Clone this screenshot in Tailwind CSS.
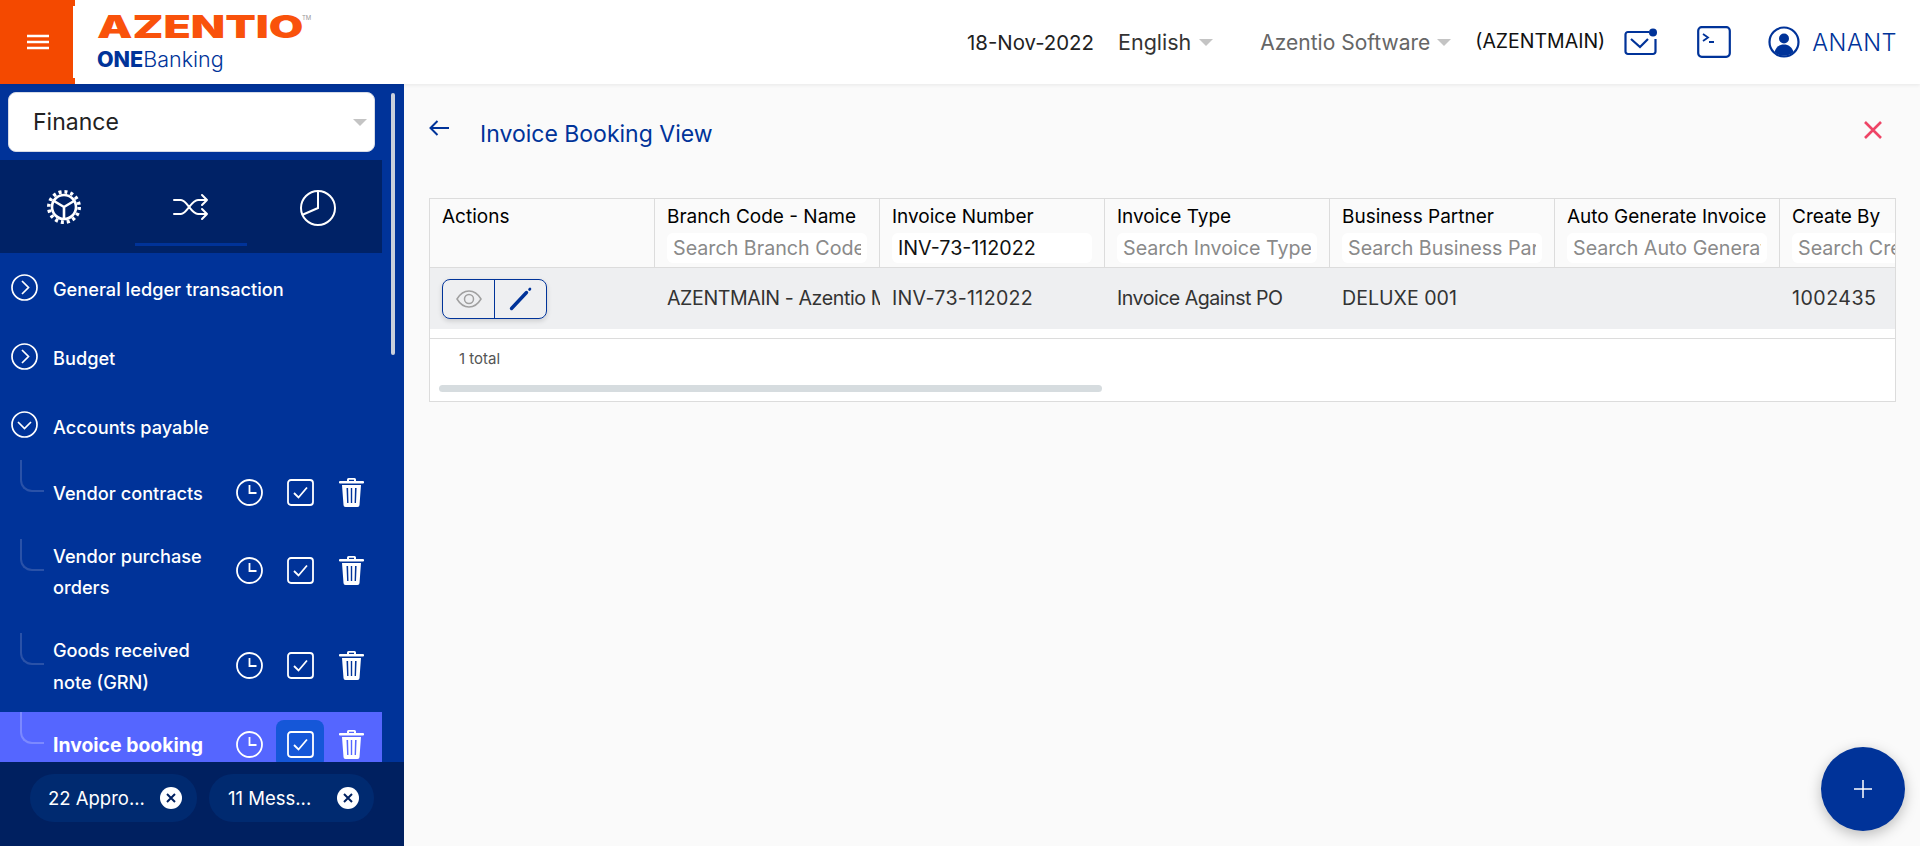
<!DOCTYPE html>
<html lang="en">
<head>
  <meta charset="UTF-8" />
  <title>Invoice Booking View</title>
  <script src="https://cdn.jsdelivr.net/npm/@tailwindcss/browser@4"></script>
</head>
<body class="h-[846px] w-[1920px] overflow-hidden bg-[#fafafa] font-['Inter',sans-serif]">
  <header class="relative z-10 flex h-[84px] items-center bg-white shadow-[0_1px_4px_rgba(0,0,0,0.08)]">
    <button class="relative flex h-[84px] w-[75px] items-center justify-center bg-[#f44900]">
      <svg width="24" height="16" viewBox="0 0 24 16" fill="none" stroke="#fff" stroke-width="2.4"><path d="M1 2h22M1 8h22M1 14h22"/></svg>
      <span class="absolute top-[6px] left-[73px] h-[72px] w-[2px] bg-white"></span>
    </button>
    <div class="ml-[22px] flex w-[240px] flex-col">
      <div class="flex h-[30px] items-center">
        <span class="inline-block w-[205px] origin-left scale-x-[1.44] text-[31px] leading-[30px] font-black text-[#f9520b]">AZENTIO</span>
        <span class="mb-[20px] text-[6px] text-[#999]">TM</span>
      </div>
      <div class="mt-[4px] text-[21.500px] leading-[26px] font-light text-[#003399]"><span class="font-extrabold">ONE</span>Banking</div>
    </div>
    <div class="ml-auto flex items-center pr-[23px]">
      <span class="mt-[2px] text-[20.400px] text-[#222]">18-Nov-2022</span>
      <span class="ml-[24px] text-[21.500px] text-[#333]">English</span>
      <span class="mt-[1px] ml-[8px] h-0 w-0 border-x-[7px] border-t-[7px] border-x-transparent border-t-[#c4c4c4]"></span>
      <span class="mt-[2px] ml-[47px] text-[21px] text-[#666]">Azentio Software</span>
      <span class="mt-[1px] ml-[7px] h-0 w-0 border-x-[7px] border-t-[7px] border-x-transparent border-t-[#c4c4c4]"></span>
      <span class="ml-[24px] text-[19.500px] text-[#111]">(AZENTMAIN)</span>
      <svg class="ml-[19px]" width="34" height="28" viewBox="0 0 34 28" fill="none" stroke="#003399" stroke-width="2.2"><path d="M25 4H4a2.500 2.500 0 0 0-2.500 2.500v17A2.500 2.500 0 0 0 4 26h25a2.500 2.500 0 0 0 2.500-2.500V11"/><path d="M7 11l9 8 8-8"/><circle cx="29" cy="4.500" r="4" fill="#003399" stroke="none"/></svg>
      <svg class="ml-[39px]" width="34" height="32" viewBox="0 0 34 32" fill="none" stroke="#003399" stroke-width="2.2"><rect x="1.200" y="1.200" width="31.600" height="29.600" rx="3.500"/><path d="M6 8l5 3.500L6 15M12 16h5" stroke-width="1.800"/></svg>
      <svg class="ml-[37px]" width="32" height="32" viewBox="0 0 32 32" fill="none"><circle cx="16" cy="16" r="14.500" stroke="#003399" stroke-width="2.200"/><circle cx="16" cy="12.500" r="5" fill="#003399"/><path d="M6.500 26c1.500-5 5-7.500 9.500-7.500s8 2.500 9.500 7.500a14 14 0 0 1-19 0z" fill="#003399"/></svg>
      <span class="mt-[2px] ml-[12px] text-[23.500px] font-light tracking-[0.5px] text-[#003399]">ANANT</span>
    </div>
  </header>

  <div class="flex h-[762px]">
    <aside class="relative flex w-[404px] shrink-0 flex-col overflow-hidden bg-[#003399]">
      <div class="absolute top-[9px] left-[391px] h-[262px] w-[4px] rounded bg-[#c9d0dc]"></div>
      <div class="px-[8px] pt-[8px]">
        <div class="flex h-[60px] w-[367px] items-center justify-between rounded-lg border border-[#d6dbe6] bg-white pr-[7px] pl-[24px]">
          <span class="text-[23px] text-[#222]">Finance</span>
          <span class="h-0 w-0 border-x-[7px] border-t-[7px] border-x-transparent border-t-[#c4c4c4]"></span>
        </div>
      </div>
      <div class="relative mt-[8px] grid h-[93px] w-[382px] shrink-0 grid-cols-[128px_127px_127px] items-center justify-items-center bg-[#002266]">
        <svg width="36" height="36" viewBox="0 0 36 36" fill="none" stroke="#fff">
          <circle cx="18" cy="18" r="15.200" stroke-width="3.600" stroke-dasharray="3 2.970"/>
          <circle cx="18" cy="18" r="12" stroke-width="2.600"/>
          <path d="M18 18L8 12M18 18l10-6M18 18v12" stroke-width="2.600"/>
        </svg>
        <svg class="-ml-[2px]" width="36" height="30" viewBox="0 0 36 30" fill="none" stroke="#fff" stroke-width="2" stroke-linecap="round" stroke-linejoin="round">
          <path d="M1 8h7c6 0 10 14 17 14h9M1 22h7c6 0 10-14 17-14h9M29 3l5 5-5 5M29 17l5 5-5 5"/>
        </svg>
        <svg class="-ml-[2px]" width="38" height="38" viewBox="0 0 38 38" fill="none" stroke="#fff" stroke-width="2">
          <circle cx="19" cy="20" r="17"/>
          <path d="M19 3v17L3 27"/>
        </svg>
        <div class="absolute top-[83px] left-[135px] h-[3px] w-[112px] bg-[#003399]"></div>
      </div>

      <div class="min-h-0 flex-1 overflow-hidden">
        <div class="mt-px flex h-[69px] items-center pt-[3px] pl-[11px] text-[18.200px] font-medium text-white">
          <svg class="mr-[15px] -mt-[6px]" width="27" height="27" viewBox="0 0 27 27" fill="none" stroke="#fff" stroke-width="1.700"><circle cx="13.500" cy="13.500" r="12.500"/><path d="M11 7l6.500 6.500L11 20"/></svg>
          General ledger transaction
        </div>
        <div class="flex h-[69px] items-center pt-[3px] pl-[11px] text-[18.200px] font-medium text-white">
          <svg class="mr-[15px] -mt-[6px]" width="27" height="27" viewBox="0 0 27 27" fill="none" stroke="#fff" stroke-width="1.700"><circle cx="13.500" cy="13.500" r="12.500"/><path d="M11 7l6.500 6.500L11 20"/></svg>
          Budget
        </div>
        <div class="flex h-[68px] items-center pt-[3px] pl-[11px] text-[18.200px] font-medium text-white">
          <svg class="mr-[15px] -mt-[6px]" width="27" height="27" viewBox="0 0 27 27" fill="none" stroke="#fff" stroke-width="1.700"><circle cx="13.500" cy="13.500" r="12.500"/><path d="M7 11l6.500 6.500L20 11"/></svg>
          Accounts payable
        </div>

        <!-- sub menu -->
        <div class="relative flex h-[79px] items-center pb-[15px] pl-[53px] text-[18.200px] leading-[32px] font-medium text-white">
          <div class="absolute top-0 left-[20px] h-[32px] w-[24px] rounded-bl-xl border-b-2 border-l-2 border-[#2a52a8]"></div>
          <span class="mt-[1px] w-[183px]">Vendor contracts</span>
          <div class="flex items-center">
            <svg width="27" height="27" viewBox="0 0 27 27" fill="none" stroke="#fff" stroke-width="1.800"><circle cx="13.500" cy="13.500" r="12.500"/><path d="M13.500 6v8h7"/></svg>
            <svg class="ml-[24px]" width="27" height="27" viewBox="0 0 27 27" fill="none" stroke="#fff" stroke-width="1.800"><rect x="1" y="1" width="25" height="25" rx="3"/><path d="M7 14l4.500 4.500L20 8.500"/></svg>
            <svg class="ml-[25px]" width="25" height="29" viewBox="0 0 25 29" fill="#fff"><path d="M8 3V1.500A1.500 1.500 0 0 1 9.500 0h6A1.500 1.500 0 0 1 17 1.500V3h7a1 1 0 0 1 0 2.500H1A1 1 0 0 1 1 3zM10 1.800V3h5V1.800z"/><path fill-rule="evenodd" d="M3 7h19l-1.500 20a2 2 0 0 1-2 2h-12a2 2 0 0 1-2-2zM7.500 10l.6 15h1.400l-.4-15zM11.800 10v15h1.400V10zM16 10l-.4 15H17l.6-15z"/></svg>
          </div>
        </div>
        <div class="relative flex h-[94px] items-center pb-[30px] pl-[53px] text-[18.200px] leading-[31px] font-medium text-white">
          <div class="absolute top-0 left-[20px] h-[32px] w-[24px] rounded-bl-xl border-b-2 border-l-2 border-[#2a52a8]"></div>
          <span class="mt-[1px] w-[183px]">Vendor purchase<br>orders</span>
          <div class="-mt-[2px] flex items-center">
            <svg width="27" height="27" viewBox="0 0 27 27" fill="none" stroke="#fff" stroke-width="1.800"><circle cx="13.500" cy="13.500" r="12.500"/><path d="M13.500 6v8h7"/></svg>
            <svg class="ml-[24px]" width="27" height="27" viewBox="0 0 27 27" fill="none" stroke="#fff" stroke-width="1.800"><rect x="1" y="1" width="25" height="25" rx="3"/><path d="M7 14l4.500 4.500L20 8.500"/></svg>
            <svg class="ml-[25px]" width="25" height="29" viewBox="0 0 25 29" fill="#fff"><path d="M8 3V1.500A1.500 1.500 0 0 1 9.500 0h6A1.500 1.500 0 0 1 17 1.500V3h7a1 1 0 0 1 0 2.500H1A1 1 0 0 1 1 3zM10 1.800V3h5V1.800z"/><path fill-rule="evenodd" d="M3 7h19l-1.500 20a2 2 0 0 1-2 2h-12a2 2 0 0 1-2-2zM7.500 10l.6 15h1.400l-.4-15zM11.800 10v15h1.400V10zM16 10l-.4 15H17l.6-15z"/></svg>
          </div>
        </div>
        <div class="relative flex h-[79px] items-center pb-[15px] pl-[53px] text-[18.200px] leading-[32px] font-medium text-white">
          <div class="absolute top-0 left-[20px] h-[32px] w-[24px] rounded-bl-xl border-b-2 border-l-2 border-[#2a52a8]"></div>
          <span class="mt-[1px] w-[183px]">Goods received<br>note (GRN)</span>
          <div class="flex items-center">
            <svg width="27" height="27" viewBox="0 0 27 27" fill="none" stroke="#fff" stroke-width="1.800"><circle cx="13.500" cy="13.500" r="12.500"/><path d="M13.500 6v8h7"/></svg>
            <svg class="ml-[24px]" width="27" height="27" viewBox="0 0 27 27" fill="none" stroke="#fff" stroke-width="1.800"><rect x="1" y="1" width="25" height="25" rx="3"/><path d="M7 14l4.500 4.500L20 8.500"/></svg>
            <svg class="ml-[25px]" width="25" height="29" viewBox="0 0 25 29" fill="#fff"><path d="M8 3V1.500A1.500 1.500 0 0 1 9.500 0h6A1.500 1.500 0 0 1 17 1.500V3h7a1 1 0 0 1 0 2.500H1A1 1 0 0 1 1 3zM10 1.800V3h5V1.800z"/><path fill-rule="evenodd" d="M3 7h19l-1.500 20a2 2 0 0 1-2 2h-12a2 2 0 0 1-2-2zM7.500 10l.6 15h1.400l-.4-15zM11.800 10v15h1.400V10zM16 10l-.4 15H17l.6-15z"/></svg>
          </div>
        </div>
        <div class="relative flex h-[79px] w-[382px] items-center bg-[#5566ff] pb-[15px] pl-[53px] text-[19.400px] leading-[32px] font-bold text-white">
          <div class="absolute top-0 left-[20px] h-[32px] w-[24px] rounded-bl-xl border-b-2 border-l-2 border-[#7c89ff]"></div>
          <span class="mt-[2px] w-[183px]">Invoice booking</span>
          <div class="flex items-center">
            <svg width="27" height="27" viewBox="0 0 27 27" fill="none" stroke="#fff" stroke-width="1.800"><circle cx="13.500" cy="13.500" r="12.500"/><path d="M13.500 6v8h7"/></svg>
            <div class="ml-[13px] flex h-[48px] w-[48px] items-center justify-center rounded-lg bg-[#1557d8]">
              <svg width="27" height="27" viewBox="0 0 27 27" fill="none" stroke="#fff" stroke-width="1.800"><rect x="1" y="1" width="25" height="25" rx="3"/><path d="M7 14l4.500 4.500L20 8.500"/></svg>
            </div>
            <svg class="ml-[15px]" width="25" height="29" viewBox="0 0 25 29" fill="#fff"><path d="M8 3V1.500A1.500 1.500 0 0 1 9.500 0h6A1.500 1.500 0 0 1 17 1.500V3h7a1 1 0 0 1 0 2.500H1A1 1 0 0 1 1 3zM10 1.800V3h5V1.800z"/><path fill-rule="evenodd" d="M3 7h19l-1.500 20a2 2 0 0 1-2 2h-12a2 2 0 0 1-2-2zM7.500 10l.6 15h1.400l-.4-15zM11.800 10v15h1.400V10zM16 10l-.4 15H17l.6-15z"/></svg>
          </div>
        </div>
      </div>

      <div class="flex h-[84px] shrink-0 items-center gap-[12px] bg-[#002060] pb-[12px] pl-[30px]">
        <div class="flex h-[48px] w-[167px] items-center justify-between rounded-full bg-[#002a70] pr-[15px] pl-[18px] text-[18.500px] text-white">
          <span class="mt-[2px]">22 Appro...</span>
          <span class="flex h-[22px] w-[22px] items-center justify-center rounded-full bg-white">
            <svg width="10" height="10" viewBox="0 0 10 10" stroke="#002060" stroke-width="2"><path d="M1 1l8 8M9 1l-8 8"/></svg>
          </span>
        </div>
        <div class="flex h-[48px] w-[165px] items-center justify-between rounded-full bg-[#002a70] pr-[15px] pl-[19px] text-[18.500px] text-white">
          <span class="mt-[2px]">11 Mess...</span>
          <span class="flex h-[22px] w-[22px] items-center justify-center rounded-full bg-white">
            <svg width="10" height="10" viewBox="0 0 10 10" stroke="#002060" stroke-width="2"><path d="M1 1l8 8M9 1l-8 8"/></svg>
          </span>
        </div>
      </div>
    </aside>

    <main class="relative min-w-0 flex-1 px-[25px]">
      <div class="flex h-[114px] items-center pb-[21px]">
        <svg class="-mt-[5px]" width="20" height="16" viewBox="0 0 20 16" fill="none" stroke="#003399" stroke-width="2"><path d="M20 8H2M8.500 1L1.500 8l7 7"/></svg>
        <h1 class="mt-[7px] ml-[31px] text-[23px] font-normal text-[#003399]">Invoice Booking View</h1>
        <svg class="mt-[-2px] ml-auto mr-[13px]" width="18" height="18" viewBox="0 0 18 18" fill="none" stroke="#ee4466" stroke-width="2.600"><path d="M1 1l16 16M17 1L1 17"/></svg>
      </div>

      <div class="w-[1467px] overflow-hidden border border-[#dcdcdc] bg-white">
        <div class="flex h-[69px] border-b border-[#dcdcdc] bg-[#fafafa] text-[19px] leading-[26px] text-black">
          <div class="h-full w-[225px] shrink-0 border-r border-[#dcdcdc] px-[12px] pt-[5px]">Actions</div>
          <div class="h-full w-[225px] shrink-0 border-r border-[#dcdcdc] px-[12px] pt-[5px]">
            <div class="whitespace-nowrap">Branch Code - Name</div>
            <input class="mt-[3px] h-[30px] w-[200px] rounded-md bg-white px-[6px] text-[19.700px] outline-none placeholder:text-[#8a8a8a]" placeholder="Search Branch Code - Name" />
          </div>
          <div class="h-full w-[225px] shrink-0 border-r border-[#dcdcdc] px-[12px] pt-[5px]">
            <div class="whitespace-nowrap">Invoice Number</div>
            <input class="mt-[3px] h-[30px] w-[200px] rounded-md bg-white px-[6px] text-[19.700px] text-[#111] outline-none" value="INV-73-112022" />
          </div>
          <div class="h-full w-[225px] shrink-0 border-r border-[#dcdcdc] px-[12px] pt-[5px]">
            <div class="whitespace-nowrap">Invoice Type</div>
            <input class="mt-[3px] h-[30px] w-[200px] rounded-md bg-white px-[6px] text-[19.700px] outline-none placeholder:text-[#8a8a8a]" placeholder="Search Invoice Type" />
          </div>
          <div class="h-full w-[225px] shrink-0 border-r border-[#dcdcdc] px-[12px] pt-[5px]">
            <div class="whitespace-nowrap">Business Partner</div>
            <input class="mt-[3px] h-[30px] w-[200px] rounded-md bg-white px-[6px] text-[19.700px] outline-none placeholder:text-[#8a8a8a]" placeholder="Search Business Partner" />
          </div>
          <div class="h-full w-[225px] shrink-0 border-r border-[#dcdcdc] px-[12px] pt-[5px]">
            <div class="whitespace-nowrap">Auto Generate Invoice</div>
            <input class="mt-[3px] h-[30px] w-[200px] rounded-md bg-white px-[6px] text-[19.700px] outline-none placeholder:text-[#8a8a8a]" placeholder="Search Auto Generate Invoice" />
          </div>
          <div class="h-full w-[225px] shrink-0 px-[12px] pt-[5px]">
            <div class="whitespace-nowrap">Create By</div>
            <input class="mt-[3px] h-[30px] w-[200px] rounded-md bg-white px-[6px] text-[19.700px] outline-none placeholder:text-[#8a8a8a]" placeholder="Search Create By" />
          </div>
        </div>
        <div class="flex h-[61px] items-center bg-[#eeeff1] text-[19.600px] text-[#333]">
          <div class="w-[225px] shrink-0 px-[12px]">
            <div class="flex h-[40px] w-[105px] overflow-hidden rounded-lg border border-[#003399] shadow-[0_2px_5px_rgba(0,0,0,0.15)]">
              <div class="flex w-[52px] items-center justify-center border-r border-[#003399]">
                <svg width="26" height="18" viewBox="0 0 26 18" fill="none" stroke="#a0a0a0" stroke-width="1.500"><path d="M1 9c3-5 7.500-8 12-8s9 3 12 8c-3 5-7.500 8-12 8S4 14 1 9z"/><circle cx="13" cy="9" r="4.500"/></svg>
              </div>
              <div class="flex flex-1 items-center justify-center">
                <svg width="24" height="24" viewBox="0 0 24 24" fill="none" stroke="#003399" stroke-linecap="round"><path d="M2.500 21.500L17.500 5.500" stroke-width="3.400"/><path d="M20.500 2.500l.5-.5" stroke-width="2.600"/></svg>
              </div>
            </div>
          </div>
          <div class="w-[225px] shrink-0 overflow-hidden pl-[12px] tracking-[-0.4px] whitespace-nowrap">AZENTMAIN - Azentio Main Branch</div>
          <div class="w-[225px] shrink-0 pl-[12px] tracking-[0.3px]">INV-73-112022</div>
          <div class="w-[225px] shrink-0 pl-[12px] tracking-[-0.5px]">Invoice Against PO</div>
          <div class="w-[225px] shrink-0 pl-[12px]">DELUXE 001</div>
          <div class="w-[225px] shrink-0 pl-[12px]"></div>
          <div class="w-[225px] shrink-0 pl-[12px] tracking-[0.5px]">1002435</div>
        </div>
        <div class="h-[10px] border-b border-[#dcdcdc] bg-white"></div>
        <div class="h-[62px] bg-white pt-[9px] pl-[29px] text-[15px] text-[#555]">
          1 total
          <div class="mt-[14px] -ml-[20px] h-[7px] w-[663px] rounded-full bg-[#d6dcdf]"></div>
        </div>
      </div>

      <button class="absolute top-[663px] left-[1417px] flex h-[84px] w-[84px] items-center justify-center rounded-full bg-[#003399] shadow-[0_4px_14px_rgba(0,0,0,0.25)]">
        <svg width="18" height="18" viewBox="0 0 18 18" stroke="#fff" stroke-width="1.500"><path d="M9 0v18M0 9h18"/></svg>
      </button>
    </main>
  </div>
</body>
</html>
